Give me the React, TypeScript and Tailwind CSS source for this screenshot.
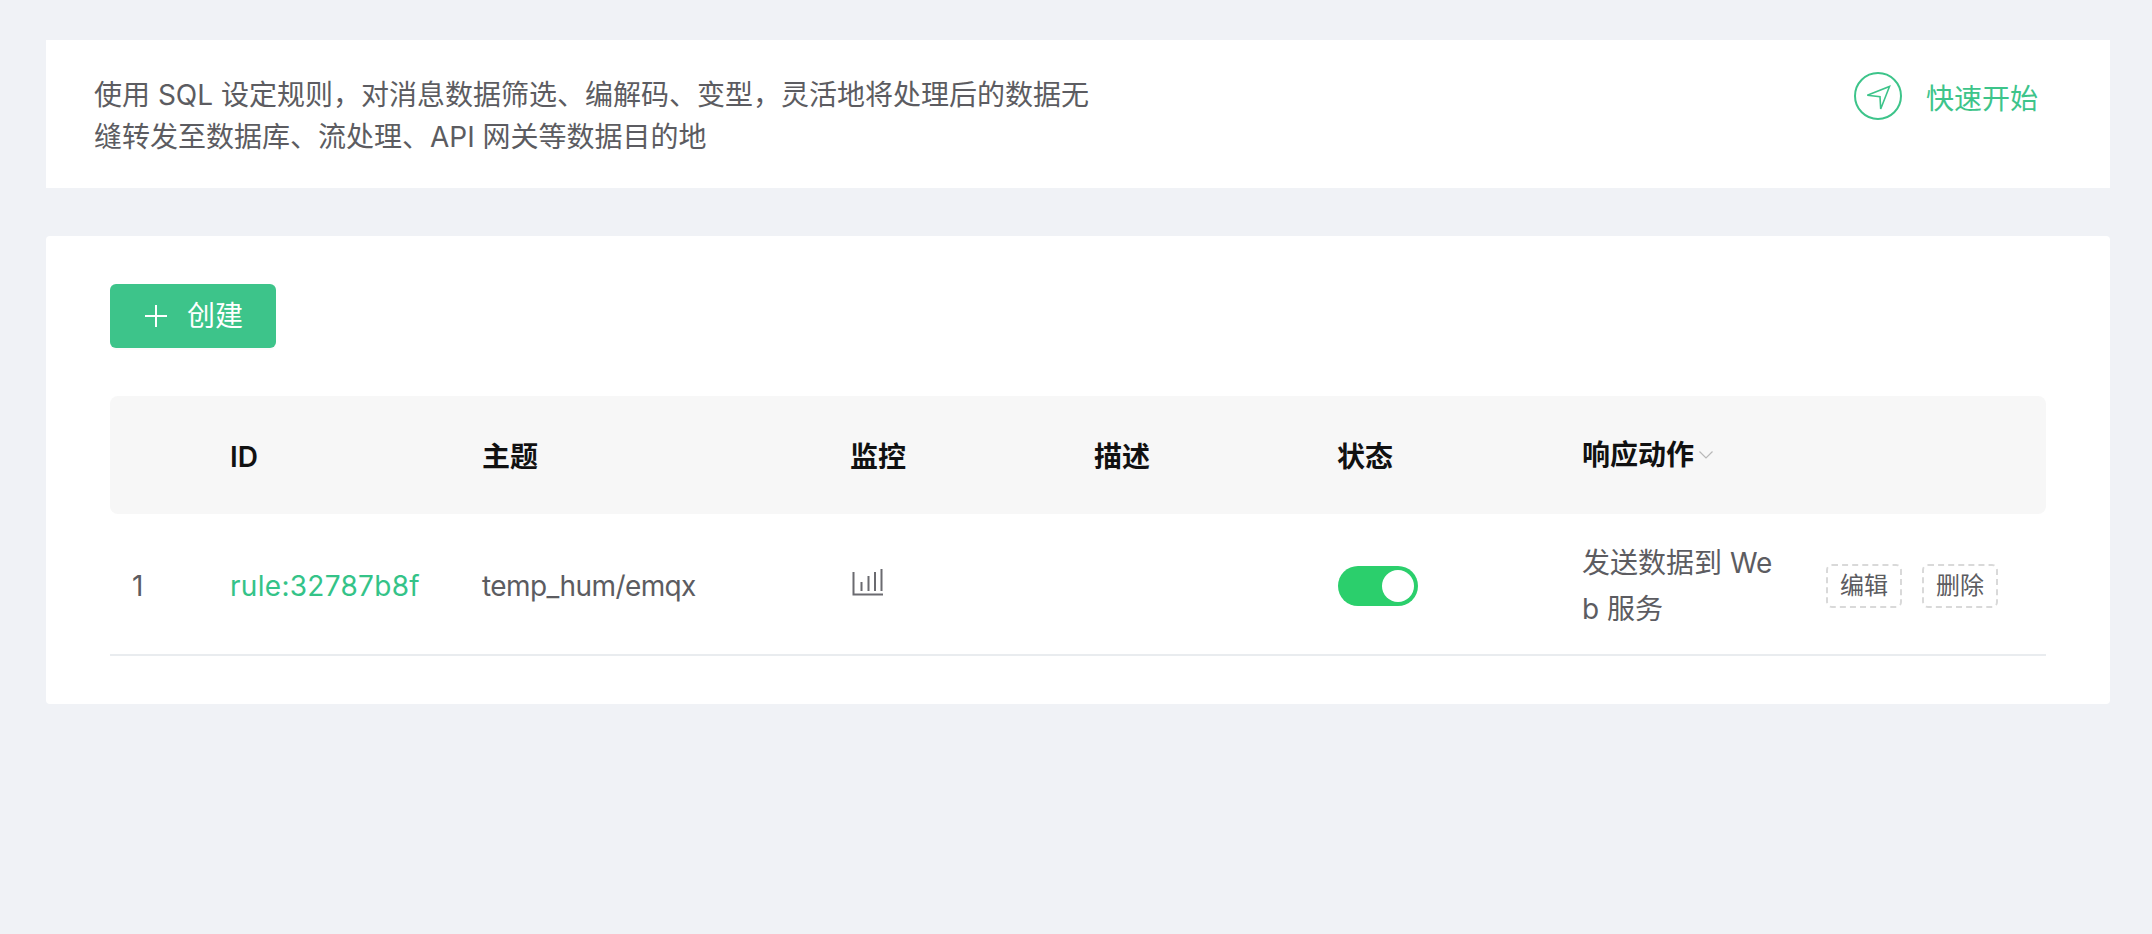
export default function App() {
  const cols = "grid grid-cols-[99px_252px_368px_244px_244px_244px_243px_1fr]";
  return (
    <div className="min-h-[934px] bg-[#f0f2f6] pt-[40px] pl-[46px] pr-[42px] text-[28px] leading-[42px] text-[#5c5c61] font-['Inter','Noto_Sans_CJK_SC',sans-serif]">
      <div className="flex justify-between bg-white pt-[34px] pl-[48px] pr-[72px] h-[148px]">
        <p className="w-[1000px]">使用 SQL 设定规则，对消息数据筛选、编解码、变型，灵活地将处理后的数据无缝转发至数据库、流处理、API 网关等数据目的地</p>
        <div className="flex items-center gap-[24px] h-[48px] -mt-[2px] text-[#3dc48a]">
          <span className="flex items-center justify-center w-[48px] h-[48px] rounded-full border-2 border-[#3dc48a]">
            <svg width="28" height="28" viewBox="-2 -2 28 28" fill="none" stroke="#3dc48a" strokeWidth="1.6" strokeLinejoin="miter">
              <path d="M1.3 11.3 L23.5 2.5 L14.7 25 L14 12.7 Z" />
            </svg>
          </span>
          <span className="pt-[5px]">快速开始</span>
        </div>
      </div>

      <div className="mt-[48px] bg-white rounded-[4px] px-[64px] pt-[48px] pb-[48px]">
        <button className="flex items-center h-[64px] w-[166px] pl-[34px] gap-[19px] rounded-[6px] bg-[#3dc48a] text-white shadow-[0_2px_0_rgba(0,0,0,0.015)]">
          <svg width="24" height="24" viewBox="0 0 24 24" fill="none" stroke="#ffffff" strokeWidth="2">
            <path d="M12 1 V23 M1 12 H23" />
          </svg>
          <span>创建</span>
        </button>

        <div className={`${cols} mt-[48px] h-[118px] pt-[3px] items-center rounded-[8px] bg-[#f7f7f7] font-semibold text-[#111111]`}>
          <div />
          <div className="pl-[21px]">ID</div>
          <div className="pl-[21px]">主题</div>
          <div className="pl-[21px]">监控</div>
          <div className="pl-[21px]">描述</div>
          <div className="pl-[20px]">状态</div>
          <div className="pl-[21px] mb-[4px] flex items-center gap-[5px]">
            <span>响应动作</span>
            <svg width="14" height="8" viewBox="0 0 14 8" fill="none" stroke="#b8b8b8" strokeWidth="1.2">
              <path d="M0.5 0.5 L7 7 L13.5 0.5" />
            </svg>
          </div>
          <div />
        </div>

        <div className={`${cols} h-[142px] pt-[4px] items-center border-b-2 border-[#e9ecef]`}>
          <div className="pl-[22px]">1</div>
          <div className="pl-[21px] tracking-[0.3px] text-[#34c388]">rule:32787b8f</div>
          <div className="pl-[21px] tracking-[-0.6px]">temp_hum/emqx</div>
          <div className="pl-[23px] mb-[6px] flex">
            <svg width="32" height="28" viewBox="0 0 32 28" fill="none" stroke="#6b6b70" strokeWidth="2">
              <path d="M1.5 3 V25.5 H31" />
              <path d="M9.5 13 V22 M16.5 7 V22 M23 3 V22 M29.5 0 V22" />
            </svg>
          </div>
          <div />
          <div className="pl-[21px]">
            <div className="flex items-center justify-end w-[80px] h-[40px] rounded-full bg-[#2bcf6c] pr-[4px]">
              <span className="block w-[32px] h-[32px] rounded-full bg-white" />
            </div>
          </div>
          <div className="pl-[21px] pr-[23px] leading-[46px] break-all">发送数据到 Web 服务</div>
          <div className="pl-[22px] flex gap-[20px] text-[24px]">
            <button className="w-[76px] h-[44px] rounded-[6px] border-2 border-dashed border-[#d9d9d9] leading-none">编辑</button>
            <button className="w-[76px] h-[44px] rounded-[6px] border-2 border-dashed border-[#d9d9d9] leading-none">删除</button>
          </div>
        </div>
      </div>
    </div>
  );
}
